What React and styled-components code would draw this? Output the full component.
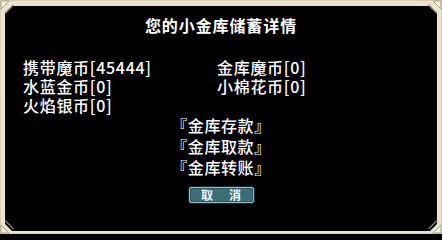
import React from 'react';
import styled, { createGlobalStyle } from 'styled-components';

const GlobalStyle = createGlobalStyle`
  html, body {
    margin: 0;
    padding: 0;
    background: #000;
  }
  body {
    font-family: "Noto Sans CJK SC", "Noto Sans", sans-serif;
  }
`;

const Frame = styled.div`
  position: relative;
  box-sizing: border-box;
  width: 442px;
  height: 234px;
  padding: 6px 5px 3px 5px;
  background: #ebe3cc;
  box-shadow: inset 0 0 0 1px #d6ccb0;
`;

const Panel = styled.div`
  box-sizing: border-box;
  height: 100%;
  background: #000;
  color: #fff;
  display: flex;
  flex-direction: column;
  padding: 9px 0 0 18px;
  clip-path: polygon(7px 0, calc(100% - 7px) 0, 100% 7px, 100% calc(100% - 7px),
    calc(100% - 7px) 100%, 7px 100%, 0 calc(100% - 7px), 0 7px);
`;

const Title = styled.h1`
  margin: 0 18px 0 0;
  font-size: 16px;
  line-height: 20px;
  font-weight: 700;
  letter-spacing: 0.9px;
  text-align: center;
`;

const InfoGrid = styled.div`
  margin-top: 23px;
  display: grid;
  grid-template-columns: 194px auto;
  font-size: 16px;
  line-height: 19px;
  font-weight: 500;
  letter-spacing: 0.7px;
`;

const Info = styled.span`
  white-space: nowrap;
`;

const Links = styled.div`
  margin: 0 18px 0 0;
  display: flex;
  flex-direction: column;
  align-items: center;
  font-size: 16px;
  line-height: 21px;
  font-weight: 500;
  letter-spacing: 0.6px;
`;

const LinkItem = styled.a`
  color: #fff;
  text-decoration: none;
  cursor: pointer;
`;

const ButtonRow = styled.div`
  margin: 9px 18px 0 0;
  display: flex;
  justify-content: center;
`;

const CancelButton = styled.button`
  box-sizing: border-box;
  width: 65px;
  height: 16px;
  padding: 0 0 0 2px;
  border: 1px solid #9dbcbe;
  border-radius: 2px;
  background: #3b6f78;
  box-shadow: inset 0 0 0 1px #2b5a62, 0 0 0 1px #152a2e;
  color: #f2f6f6;
  font-family: "Noto Sans CJK SC", sans-serif;
  font-size: 12px;
  font-weight: 700;
  line-height: 14px;
  letter-spacing: 2px;
  cursor: pointer;
`;

const Corner = styled.svg`
  position: absolute;
  width: 14px;
  height: 14px;
  ${(p) => (p.top ? 'top: 0;' : 'bottom: 0;')}
  ${(p) => (p.left ? 'left: 0;' : 'right: 0;')}
  transform: ${(p) => `scale(${p.left ? 1 : -1}, ${p.top ? 1 : -1})`};
`;

const CornerMark = (props) => (
  <Corner viewBox="0 0 14 14" {...props}>
    <path d="M1 1 L9 1 L1 9 Z" fill="#f7f2e4" stroke="#a89e82" strokeWidth="1" />
    <path d="M5 13.5 L13.5 5" stroke="#8a8270" strokeWidth="1.2" />
  </Corner>
);

const carried = [
  ['携带魔币[45444]', '金库魔币[0]'],
  ['水蓝金币[0]', '小棉花币[0]'],
  ['火焰银币[0]', ''],
];

const actions = ['『金库存款』', '『金库取款』', '『金库转账』'];

const App = () => (
  <>
    <GlobalStyle />
    <Frame>
      <Panel>
        <Title>您的小金库储蓄详情</Title>
        <InfoGrid>
          {carried.map((row) =>
            row.map((cell, i) => <Info key={row[0] + i}>{cell}</Info>)
          )}
        </InfoGrid>
        <Links>
          {actions.map((a) => (
            <LinkItem key={a}>{a}</LinkItem>
          ))}
        </Links>
        <ButtonRow>
          <CancelButton>取　消</CancelButton>
        </ButtonRow>
      </Panel>
      <CornerMark top left />
      <CornerMark top />
      <CornerMark left />
      <CornerMark />
    </Frame>
  </>
);

export default App;
